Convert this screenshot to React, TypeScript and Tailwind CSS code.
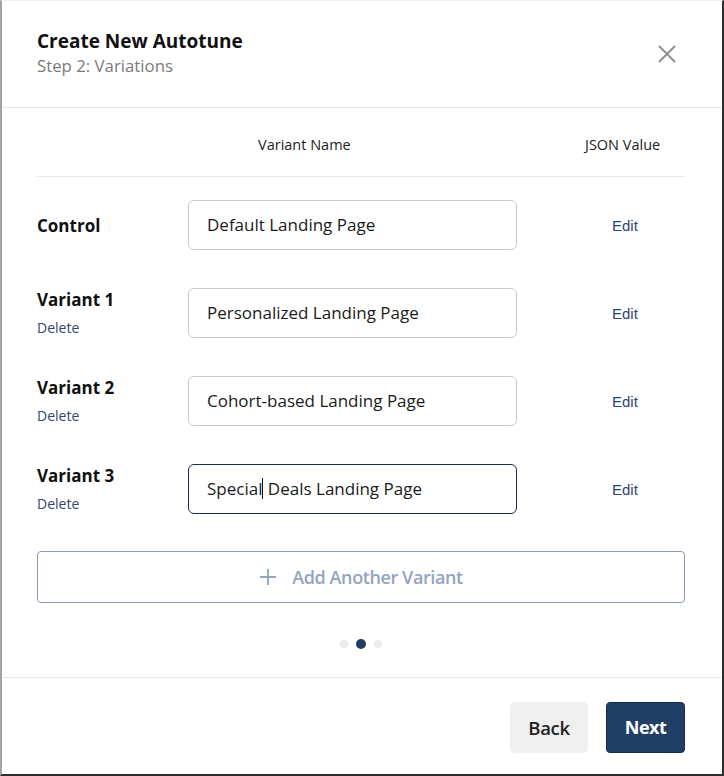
import React from 'react';

const variants = [
  { label: 'Control', value: 'Default Landing Page', deletable: false },
  { label: 'Variant 1', value: 'Personalized Landing Page', deletable: true },
  { label: 'Variant 2', value: 'Cohort-based Landing Page', deletable: true },
  { label: 'Variant 3', value: 'Special Deals Landing Page', deletable: true, focused: true },
];

const App: React.FC = () => {
  return (
    <div
      className="w-[724px] h-[776px] bg-white flex flex-col border-l-2 border-l-[#a3a3a3] border-r-2 border-r-[#2e2e2e] border-b-2 border-b-[#2e2e2e] border-t border-t-[#f0f0f0] text-[#1a1a1a]"
      style={{ fontFamily: '"Open Sans", sans-serif' }}
    >
      {/* Header */}
      <div className="h-[107px] border-b border-[#e6e6e6] flex items-start justify-between pl-[35px] pr-[44px] pt-[28px] shrink-0">
        <div>
          <h1 className="text-[19px] leading-[25px] font-bold text-[#111]">Create New Autotune</h1>
          <p className="mt-[1px] text-[16.8px] leading-[22px] text-[#7a7a7a]">Step 2: Variations</p>
        </div>
        <button className="mt-[14px] text-[#8c8c8c]">
          <svg width="22" height="22" viewBox="0 0 22 22" fill="none" stroke="currentColor" strokeWidth="1.8">
            <path d="M3 3L19 19M19 3L3 19" />
          </svg>
        </button>
      </div>

      {/* Body */}
      <div className="pl-[35px] pr-[37px] flex flex-col">
        <div className="flex items-center pt-[27px] pb-[21px] border-b border-[#e8e8e8] text-[14.5px] leading-[20px] text-[#222]">
          <div className="w-[151px]" />
          <div className="w-[329px] pl-[70px]">Variant Name</div>
          <div className="flex-1 pl-[68px]">JSON Value</div>
        </div>

        <div className="flex flex-col gap-[38px] pt-[23px]">
          {variants.map((v) => (
            <div key={v.label} className="flex items-center">
              <div className={v.deletable ? 'w-[151px] flex flex-col' : 'w-[151px] flex flex-col pt-[2px]'}>
                <span className="text-[17px] leading-[22px] font-bold text-[#111]">{v.label}</span>
                {v.deletable && (
                  <span className="mt-[7px] text-[14px] leading-[20px] text-[#2d4673]">Delete</span>
                )}
              </div>
              <div
                className={
                  v.focused
                    ? 'w-[329px] h-[50px] rounded-[6px] border-[1.5px] border-[#1c2b52] flex items-center pl-[18px] text-[17px] text-[#1a1a1a]'
                    : 'w-[329px] h-[50px] rounded-[6px] border-[1.5px] border-[#cacaca] flex items-center pl-[18px] text-[17px] text-[#1a1a1a]'
                }
              >
                {v.focused ? (
                  <span>
                    Special<span className="inline-block w-px h-[21px] bg-[#111] align-[-4px]" /> Deals Landing Page
                  </span>
                ) : (
                  v.value
                )}
              </div>
              <div className="flex-1 pl-[95px]">
                <span
                  className="text-[15px] text-[#2d4673]"
                  style={{ fontFamily: '"Liberation Sans", Arial, sans-serif' }}
                >
                  Edit
                </span>
              </div>
            </div>
          ))}
        </div>

        <button className="mt-[37px] h-[52px] rounded-[4px] border-[1.5px] border-[#8b9bb6] flex items-center justify-center gap-[15px] text-[#93a4bf] font-semibold text-[18px] tracking-[-0.4px]">
          <svg width="18" height="18" viewBox="0 0 18 18" fill="none" stroke="currentColor" strokeWidth="1.8">
            <path d="M9 1V17M1 9H17" />
          </svg>
          Add Another Variant
        </button>

        <div className="flex items-start justify-center gap-[8px] h-[74px] pt-[36px]">
          <span className="mt-[1px] w-[8px] h-[8px] rounded-full bg-[#ececec]" />
          <span className="w-[10px] h-[10px] rounded-full bg-[#1f3d66]" />
          <span className="mt-[1px] w-[8px] h-[8px] rounded-full bg-[#ececec]" />
        </div>
      </div>

      {/* Footer */}
      <div className="border-t border-[#e8e8e8] flex justify-end gap-[18px] pt-[24px] pr-[37px]">
        <button className="w-[78px] h-[51px] rounded-[5px] bg-[#efefef] text-[18.5px] font-semibold text-[#222] tracking-[-0.3px]">
          Back
        </button>
        <button className="w-[79px] h-[51px] rounded-[4px] bg-[#213f66] border border-[#172c4a] text-[18px] font-bold text-white tracking-[-0.5px]">
          Next
        </button>
      </div>
    </div>
  );
};

export default App;
